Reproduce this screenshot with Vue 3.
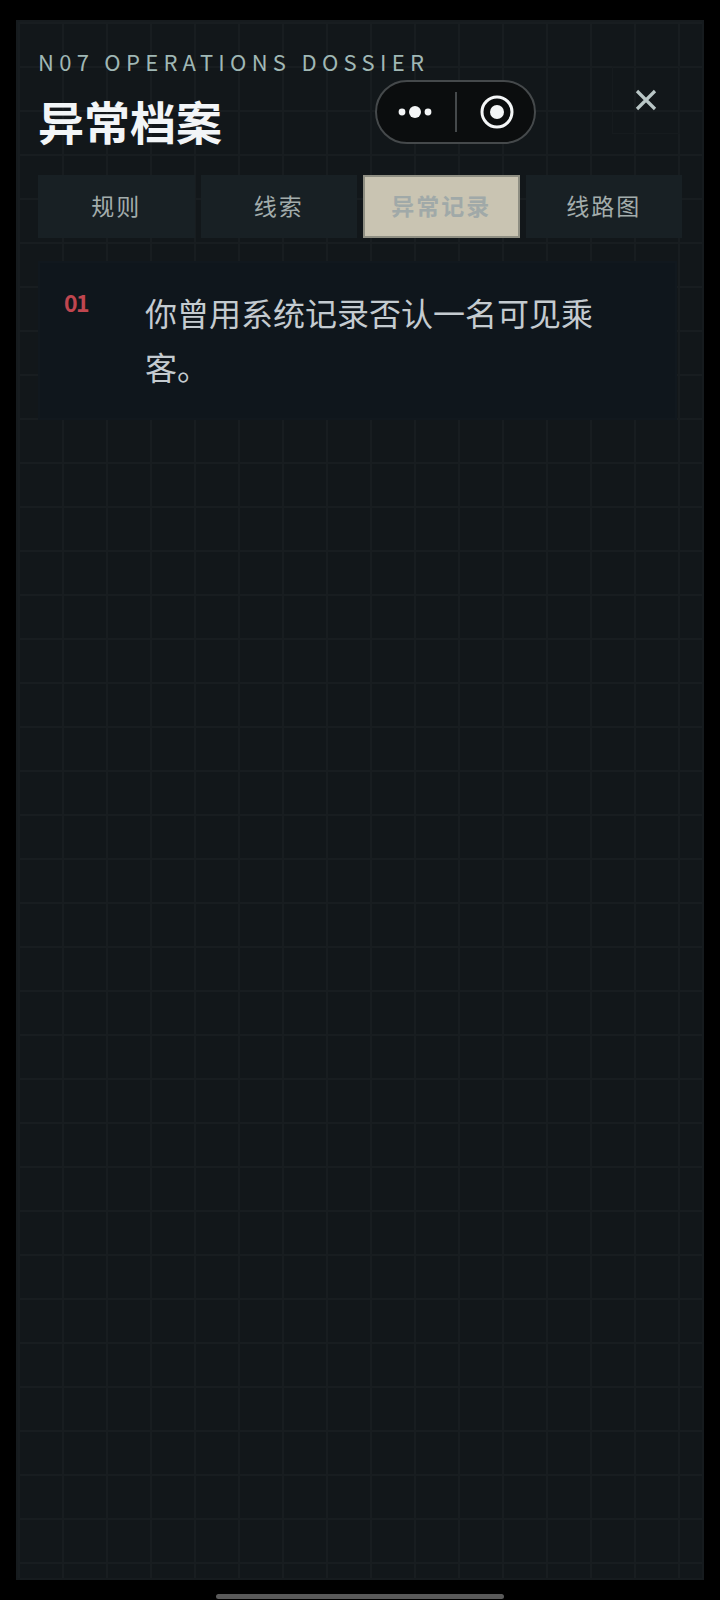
<template>
  <div class="screen">
    <section class="panel">
      <header class="head">
        <div class="head-text">
          <p class="eyebrow">N07 OPERATIONS DOSSIER</p>
          <h1 class="title">异常档案</h1>
        </div>
        <button class="close" aria-label="关闭">
          <svg width="22" height="22" viewBox="0 0 22 22">
            <path d="M2 2 L20 20 M20 2 L2 20" stroke="#b9c6c6" stroke-width="3.2" fill="none" />
          </svg>
        </button>
      </header>

      <nav class="tabs">
        <button
          v-for="tab in tabs"
          :key="tab"
          class="tab"
          :class="{ active: tab === current }"
        >
          {{ tab }}
        </button>
      </nav>

      <ul class="records">
        <li v-for="(rec, i) in records" :key="rec" class="record">
          <span class="num">{{ String(i + 1).padStart(2, "0") }}</span>
          <p class="text">{{ rec }}</p>
        </li>
      </ul>
    </section>

    <div class="capsule">
      <svg class="dots" width="36" height="14" viewBox="0 0 36 14">
        <circle cx="5" cy="7" r="3.4" fill="#f4f6f7" />
        <circle cx="18" cy="7" r="6" fill="#f4f6f7" />
        <circle cx="31" cy="7" r="3.4" fill="#f4f6f7" />
      </svg>
      <span class="divider"></span>
      <svg class="target" width="34" height="34" viewBox="0 0 34 34">
        <circle cx="17" cy="17" r="15" fill="none" stroke="#f4f6f7" stroke-width="3" />
        <circle cx="17" cy="17" r="7" fill="#f4f6f7" />
      </svg>
    </div>

    <div class="home-bar"></div>
  </div>
</template>

<script setup>
const tabs = ["规则", "线索", "异常记录", "线路图"];
const current = "异常记录";
const records = ["你曾用系统记录否认一名可见乘客。"];
</script>

<style>
html,
body {
  margin: 0;
  background: #000;
}
</style>

<style scoped>
.screen {
  position: relative;
  box-sizing: border-box;
  width: 720px;
  height: 1600px;
  padding: 20px 16px;
  background: #000;
  font-family: "Noto Sans CJK SC", "Noto Sans", sans-serif;
}
.panel {
  box-sizing: border-box;
  height: 1560px;
  padding: 23px 20px 0;
  border: 2px solid #161b1e;
  background-color: #12171a;
  background-image: linear-gradient(#181d20 2px, transparent 2px),
    linear-gradient(90deg, #181d20 2px, transparent 2px);
  background-size: 44px 44px;
  background-position: 0 0;
}
.head {
  display: flex;
  justify-content: space-between;
  align-items: flex-start;
}
.eyebrow {
  margin: 0;
  font-size: 22px;
  line-height: 32px;
  letter-spacing: 5.28px;
  color: #a0b8b5;
}
.title {
  margin: 13px 0 0;
  font-size: 46px;
  line-height: 60px;
  font-weight: 700;
  color: #f2f5f7;
}
.close {
  display: flex;
  align-items: center;
  justify-content: center;
  width: 68px;
  height: 68px;
  margin: 21px 2px 0 0;
  padding: 0;
  background: transparent;
  border: 1px solid #161b1e;
}
.tabs {
  display: grid;
  grid-template-columns: repeat(4, 1fr);
  gap: 6px;
  margin-top: 25px;
  width: 644px;
}
.tab {
  height: 63px;
  padding: 0 0 4px;
  font-family: inherit;
  font-size: 23px;
  letter-spacing: 2px;
  color: #a3adac;
  background: #182024;
  border: 2px solid #182024;
}
.tab.active {
  font-weight: 700;
  color: #a0a9a8;
  background: #c9c4b2;
  border-color: #8e8e82;
}
.records {
  list-style: none;
  margin: 23px 0 0;
  padding: 0;
}
.record {
  box-sizing: border-box;
  display: flex;
  align-items: flex-start;
  width: 639px;
  height: 159px;
  padding: 18px 24px;
  background: #0f161c;
  border: 2px solid #11181e;
}
.num {
  width: 81px;
  flex-shrink: 0;
  font-size: 23px;
  line-height: 42px;
  font-weight: 700;
  letter-spacing: -1.5px;
  color: #c0464f;
}
.text {
  margin: 4px 0 0;
  width: 470px;
  font-size: 32px;
  line-height: 54px;
  color: #c4cbd0;
}
.capsule {
  position: absolute;
  left: 375px;
  top: 80px;
  box-sizing: border-box;
  display: flex;
  align-items: center;
  width: 161px;
  height: 64px;
  background: #0b0d0e;
  border: 2px solid #45494b;
  border-radius: 32px;
}
.dots {
  margin-left: 20px;
}
.divider {
  width: 2px;
  height: 40px;
  margin-left: 22px;
  background: #45494b;
}
.target {
  margin-left: 23px;
}
.home-bar {
  position: absolute;
  left: 216px;
  bottom: 1px;
  width: 288px;
  height: 5px;
  border-radius: 3px;
  background: #5a5a5a;
}
</style>
